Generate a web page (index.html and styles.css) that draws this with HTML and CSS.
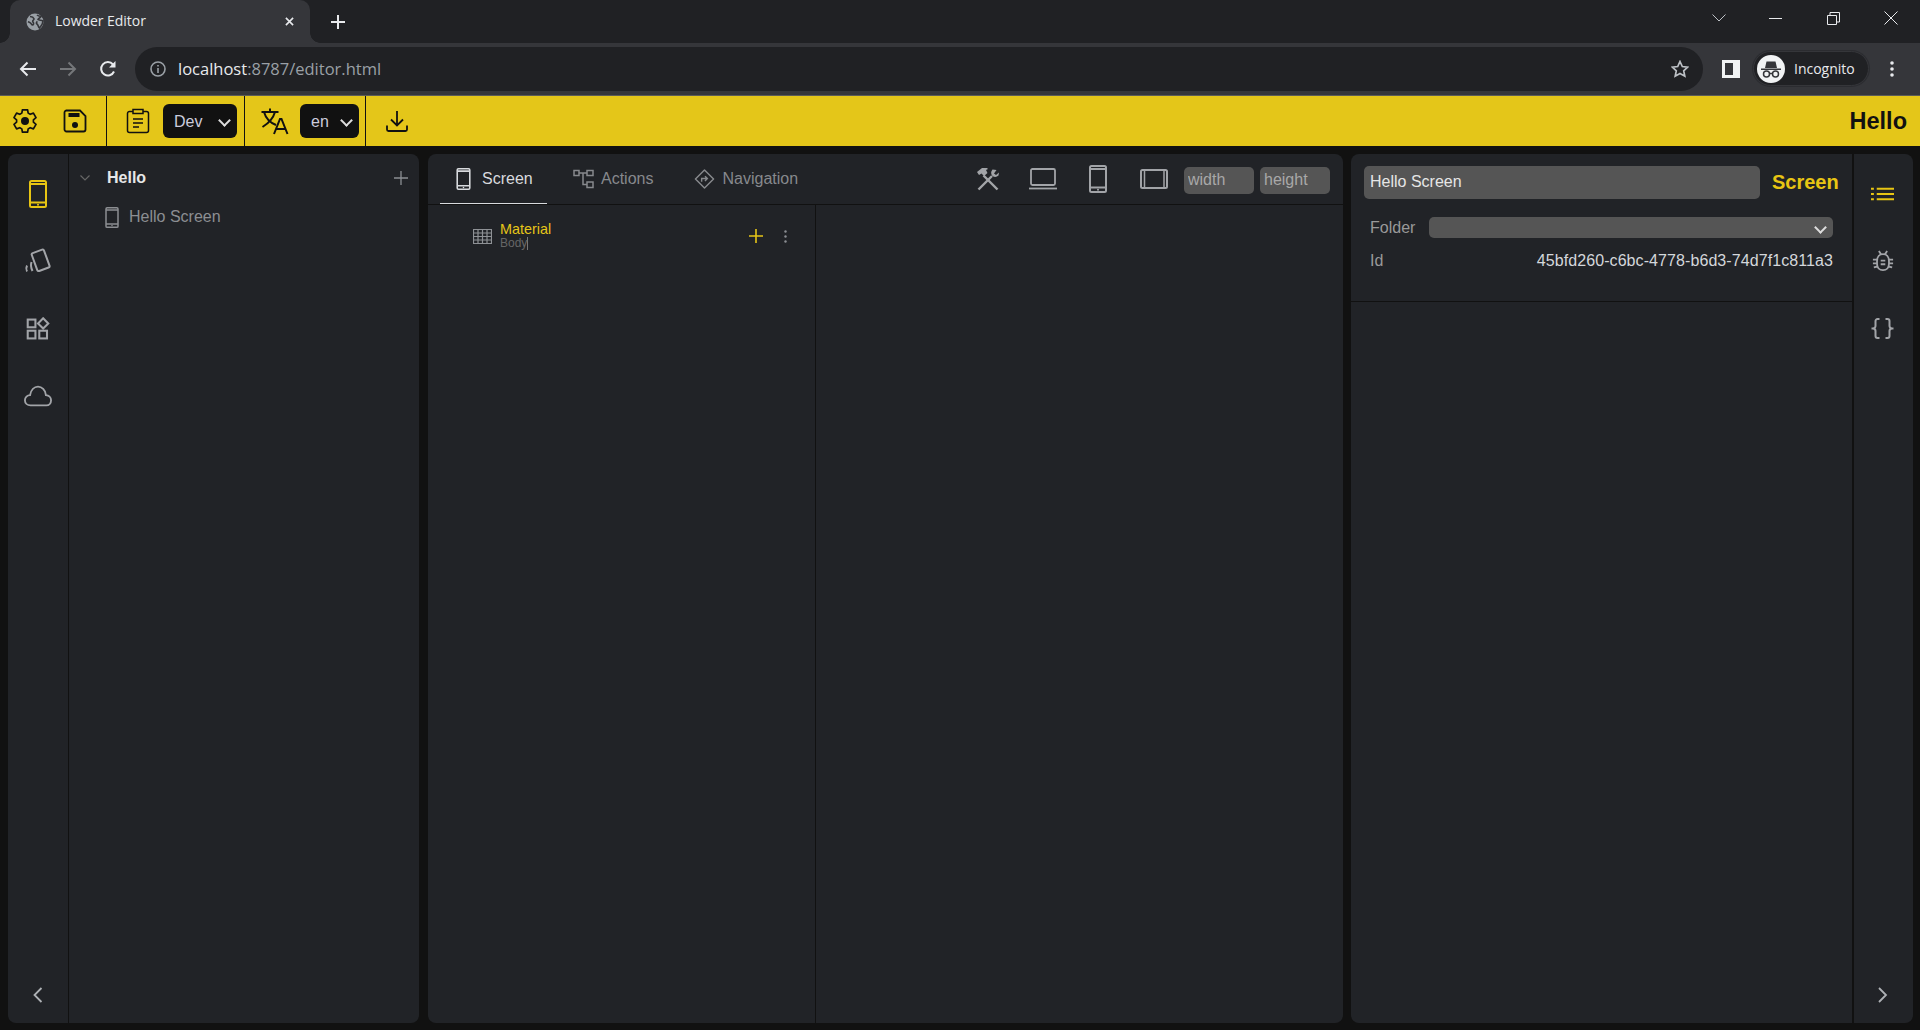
FILE: index.html
```html
<!DOCTYPE html>
<html lang="en">
<head>
<meta charset="utf-8">
<title>Lowder Editor</title>
<link rel="stylesheet" href="styles.css">
</head>
<body>
<svg class="defs" aria-hidden="true">
  <symbol id="i-phone" viewBox="0 0 18 28"><g fill="none" stroke="currentColor" stroke-width="2"><rect x="1" y="1" width="16" height="26" rx="1.5"/><path d="M1 4h16M1 22.5h16"/></g><circle cx="9" cy="24.8" r="1" fill="currentColor"/></symbol>
</svg>

<header class="tabstrip">
  <div class="tab">
    <svg class="tab-globe" viewBox="0 0 18 18"><circle cx="9" cy="9" r="8.5" fill="#9aa0a6"/><path d="M4 3.500c2 .2 3.500 1 4 2.200.3 1-1 1.400-1.300 2.400-.2 1 1.400 1.600.8 3-.4 1-1.500 1-2 0-.4-1-1.500-1.500-3.500-2.500M11 2c1 1 2.500 1.300 4 1.500-.5 1.500-2.500 1.500-3 3 1 1 3.500.5 5 1.500-.2 3-1.500 5-3.500 7-1.500-1-1-3-2.500-4-1.200-.8-.5-2 .5-2.500" fill="none" stroke="#35363a" stroke-width="1.600"/></svg>
    <span class="tab-title">Lowder Editor</span>
    <svg class="tab-close" viewBox="0 0 10 10"><path d="M1 1l8 8M9 1l-8 8" stroke="#e8eaed" stroke-width="1.800" fill="none"/></svg>
  </div>
  <svg class="new-tab" viewBox="0 0 14 14"><path d="M7 0v14M0 7h14" stroke="#e8eaed" stroke-width="2" fill="none"/></svg>
  <div class="window-controls">
    <svg class="win-chevron" viewBox="0 0 14 8"><path d="M.5.5L7 7 13.500.5" stroke="#bdc1c6" fill="none"/></svg>
    <svg class="win-min" viewBox="0 0 13 1"><path d="M0 .5h13" stroke="#e8eaed" fill="none"/></svg>
    <svg class="win-restore" viewBox="0 0 13 13"><path d="M.5 3.500h9v9h-9zM3 3.500V.5h9.500V10H9.500" stroke="#e8eaed" fill="none"/></svg>
    <svg class="win-close" viewBox="0 0 14 14"><path d="M.5.5l13 13M13.500.5l-13 13" stroke="#e8eaed" fill="none"/></svg>
  </div>
</header>

<nav class="browserbar">
  <svg class="nav-icon" viewBox="0 0 18 16"><path d="M17 8H2M8.500 1.500L2 8l6.500 6.500" stroke="#e8eaed" stroke-width="2" fill="none"/></svg>
  <svg class="nav-icon" viewBox="0 0 18 16"><path d="M1 8h15M9.500 1.500L16 8l-6.500 6.500" stroke="#75777a" stroke-width="2" fill="none"/></svg>
  <svg class="nav-icon nav-reload" viewBox="0 0 18 18"><path d="M15 11.500A6.700 6.700 0 1 1 14 4.500" stroke="#e8eaed" stroke-width="2" fill="none"/><path d="M16.500 1v6.500H10z" fill="#e8eaed"/></svg>
  <div class="omnibox">
    <svg class="omni-info" viewBox="0 0 16 16"><circle cx="8" cy="8" r="7" stroke="#9aa0a6" stroke-width="1.600" fill="none"/><path d="M8 7v5M8 4v1.600" stroke="#9aa0a6" stroke-width="1.600" fill="none"/></svg>
    <span class="url"><span class="url-host">localhost</span>:8787/editor.html</span>
    <svg class="omni-star" viewBox="0 0 18 18"><path d="M9 1.500l2.300 5 5.400.6-4 3.700 1.100 5.400L9 13.500l-4.800 2.700 1.100-5.400-4-3.700 5.400-.6z" stroke="#bdc1c6" stroke-width="1.700" fill="none"/></svg>
  </div>
  <svg class="side-panel" viewBox="0 0 18 18"><rect width="18" height="18" fill="#f1f3f4"/><rect x="3" y="3" width="8" height="12" fill="#35363a"/></svg>
  <div class="profile">
    <svg class="profile-avatar" viewBox="0 0 28 28"><circle cx="14" cy="14" r="14" fill="#f1f3f4"/><path d="M4 13.500h20v1.500H4zM8 13l1.500-6.500h9L20 13z" fill="#35363a"/><g fill="none" stroke="#35363a" stroke-width="1.500"><circle cx="9.500" cy="19" r="3"/><circle cx="18.500" cy="19" r="3"/><path d="M12.500 18.500h3"/></g></svg>
    <span class="profile-name">Incognito</span>
  </div>
  <svg class="browser-menu" viewBox="0 0 4 16"><circle cx="2" cy="2" r="1.800" fill="#e8eaed"/><circle cx="2" cy="8" r="1.800" fill="#e8eaed"/><circle cx="2" cy="14" r="1.800" fill="#e8eaed"/></svg>
</nav>

<div class="topbar">
  <div class="bar-group group-file">
    <span class="bar-icon"><svg class="ic-24" viewBox="0 0 24 24"><path d="M9.410.8H14.590L15.180 4.120 17.230 5.300 20.410 4.160 23 8.640 20.420 10.820V13.180L23 15.360 20.410 19.840 17.230 18.700 15.180 19.880 14.590 23.200H9.410L8.820 19.880 6.770 18.700 3.590 19.840 1 15.360 3.580 13.180V10.820L1 8.640 3.590 4.160 6.770 5.300 8.820 4.120z" fill="none" stroke="#111" stroke-width="1.700" stroke-linejoin="round"/><circle cx="12" cy="12" r="4" fill="#111"/></svg></span>
    <span class="bar-icon"><svg class="ic-24" viewBox="0 0 24 24"><path d="M3 1.500h14l5.500 5.500v13.500a2 2 0 0 1-2 2h-17a2 2 0 0 1-2-2v-17a2 2 0 0 1 2-2z" fill="none" stroke="#111" stroke-width="1.800"/><rect x="5.500" y="4" width="11" height="4" fill="#111"/><circle cx="12" cy="16" r="3" fill="#111"/></svg></span>
  </div>
  <div class="bar-group group-env">
    <span class="bar-icon icon-slim"><svg class="ic-24 ic-clip" viewBox="0 0 24 26"><path d="M7 3.500H3.500a2 2 0 0 0-2 2v17a2 2 0 0 0 2 2h17a2 2 0 0 0 2-2v-17a2 2 0 0 0-2-2H17M7 1.500h10v4H7zM7 11h10M7 15h10M7 19h6" fill="none" stroke="#111" stroke-width="1.500"/></svg></span>
    <span class="select-wrap"><select class="bar-select select-env"><option>Dev</option></select></span>
  </div>
  <div class="bar-group group-lang">
    <span class="bar-icon icon-slim"><svg class="ic-27" viewBox="0 0 28 27"><path d="M.5 4h17M9 .5V4M3 4c2 7 7 11 12 13M14 4c-2 7-6 11-12.500 15M13 26l6-15h1.500l6 15M15.500 21h9" fill="none" stroke="#111" stroke-width="2"/></svg></span>
    <span class="select-wrap"><select class="bar-select select-lang"><option>en</option></select></span>
  </div>
  <span class="bar-icon icon-slim icon-download"><svg class="ic-22" viewBox="0 0 22 22"><path d="M11 1v14M5 9.500l6 6 6-6M1 15.500v4a1.500 1.500 0 0 0 1.500 1.500h17a1.500 1.500 0 0 0 1.500-1.500v-4" fill="none" stroke="#111" stroke-width="1.800"/></svg></span>
  <strong class="app-name">Hello</strong>
</div>

<main class="workspace">
  <section class="panel panel-left">
    <aside class="rail rail-left">
      <div class="rail-icons">
        <svg class="rail-icon active"><use href="#i-phone"/></svg>
        <svg class="rail-icon" viewBox="0 0 28 28"><g fill="none" stroke="currentColor" stroke-width="2"><rect x="10" y="3" width="13" height="19" rx="1.500" transform="rotate(-20 16 12)"/><path d="M7.500 14c-1 3-.5 6 1 9M3 17.500c-1 2-1 4 0 6"/></g></svg>
        <svg class="rail-icon icon-grid" viewBox="0 0 28 28"><g fill="none" stroke="currentColor" stroke-width="2.400"><rect x="2" y="3" width="9" height="9"/><rect x="2" y="16" width="9" height="9"/><rect x="15.500" y="16" width="9" height="9"/><path d="M20 1.500l6 6-6 6-6-6z"/></g></svg>
        <svg class="rail-icon icon-cloud" viewBox="0 0 30 22"><path d="M7 21C3.500 21 1 18.500 1 15.500S3.500 10 6.500 10C7.500 4.500 11 1 15 1s8 3.500 8.500 9c3 .3 5.500 2.500 5.500 5.500S27 21 24 21z" fill="none" stroke="currentColor" stroke-width="2"/></svg>
      </div>
      <svg class="collapse" viewBox="0 0 10 16"><path d="M8.500 1l-7 7 7 7" fill="none" stroke="#aeb1b5" stroke-width="1.800"/></svg>
    </aside>
    <div class="tree">
      <div class="tree-head">
        <svg class="tree-chevron" viewBox="0 0 10 6"><path d="M.5.5L5 5 9.500.5" fill="none" stroke="#666" stroke-width="1.200"/></svg>
        <strong class="tree-title">Hello</strong>
        <svg class="tree-add" viewBox="0 0 14 14"><path d="M7 0v14M0 7h14" stroke="#8b8e93" stroke-width="1.300" fill="none"/></svg>
      </div>
      <div class="tree-item">
        <svg class="tree-phone"><use href="#i-phone"/></svg>
        <span>Hello Screen</span>
      </div>
    </div>
  </section>

  <section class="panel panel-mid">
    <div class="mid-head">
      <div class="tabs">
        <div class="edit-tab active">
          <svg class="tab-phone"><use href="#i-phone"/></svg>
          <span>Screen</span>
        </div>
        <div class="edit-tab">
          <svg class="tab-glyph" viewBox="0 0 21 19"><g fill="none" stroke="currentColor" stroke-width="1.500"><rect x="1" y="1" width="5" height="5"/><rect x="14" y="1" width="6" height="5"/><rect x="14" y="12.500" width="6" height="5.500"/><path d="M6 3.500h8M10 3.500V15h4"/></g></svg>
          <span>Actions</span>
        </div>
        <div class="edit-tab tab-nav">
          <svg class="tab-glyph" viewBox="0 0 21 21"><g fill="none" stroke="currentColor" stroke-width="1.500"><path d="M10.500 1L20 10.500 10.500 20 1 10.500z" stroke-linejoin="round"/><path d="M7.500 13.500V10h5.500M11 7.500l2.500 2.500-2.500 2.500"/></g></svg>
          <span>Navigation</span>
        </div>
      </div>
      <div class="viewport-tools">
        <svg class="tool tool-hammer" viewBox="0 0 24 24"><g fill="none" stroke="currentColor"><path d="M21.500 22.500L7.500 8.500" stroke-width="2.400"/><path d="M2.500 22.500L16 9" stroke-width="2.400"/></g><path d="M1 5l5-4h5l1 1-2 1 1.500 3L8 9 5.500 6.500 3 8z" fill="currentColor"/><path d="M16.500 2.500a5 5 0 0 0 0 6.500 4.800 4.800 0 0 0 6-.5l.5-3-3 2.500-2-1.500 2.500-3.500z" fill="currentColor"/></svg>
        <svg class="tool tool-laptop" viewBox="0 0 28 22"><g fill="none" stroke="currentColor" stroke-width="1.800"><rect x="2" y="1" width="24" height="16" rx="1.500"/><path d="M0 20.500h28"/></g></svg>
        <svg class="tool tool-phone"><use href="#i-phone"/></svg>
        <svg class="tool tool-tablet" viewBox="0 0 28 20"><g fill="none" stroke="currentColor" stroke-width="2"><rect x="1" y="1" width="26" height="18" rx="1.500"/><path d="M4.500 1v18M24 1v18" stroke-width="1.500"/></g></svg>
        <input class="size-input" type="text" placeholder="width">
        <input class="size-input" type="text" placeholder="height">
      </div>
    </div>
    <div class="mid-body">
      <div class="outline">
        <div class="outline-row">
          <svg class="outline-grid" viewBox="0 0 19 15"><path d="M.5.5h18v14H.5zM.5 4h18M.5 7.500h18M.5 11h18M5 .5v14M9.500.5v14M14 .5v14" fill="none" stroke="#8e9195" stroke-width="1.200"/></svg>
          <div class="outline-label">
            <span class="outline-name">Material</span>
            <span class="outline-type">Body</span>
          </div>
          <svg class="outline-add" viewBox="0 0 14 14"><path d="M7 0v14M0 7h14" stroke="#e5c518" stroke-width="1.600" fill="none"/></svg>
          <svg class="outline-more" viewBox="0 0 3 13"><circle cx="1.500" cy="1.500" r="1.200" fill="#8b8e93"/><circle cx="1.500" cy="6.500" r="1.200" fill="#8b8e93"/><circle cx="1.500" cy="11.500" r="1.200" fill="#8b8e93"/></svg>
        </div>
      </div>
      <div class="canvas"></div>
    </div>
  </section>

  <section class="panel panel-right">
    <div class="props">
      <div class="props-head">
        <div class="props-title">
          <input class="name-input" type="text" value="Hello Screen">
          <strong class="props-kind">Screen</strong>
        </div>
        <div class="prop-row prop-folder">
          <span class="prop-label">Folder</span>
          <span class="select-wrap"><select class="folder-select"><option></option></select></span>
        </div>
        <div class="prop-row prop-id">
          <span class="prop-label">Id</span>
          <span class="prop-value">45bfd260-c6bc-4778-b6d3-74d7f1c811a3</span>
        </div>
      </div>
    </div>
    <aside class="rail rail-right">
      <div class="rail-icons">
        <svg class="rail-icon active icon-list" viewBox="0 0 24 14"><path d="M6 1.500h18M6 7h18M6 12.500h18" stroke="currentColor" stroke-width="2" fill="none"/><path d="M0 1.500h3M0 7h3M0 12.500h3" stroke="currentColor" stroke-width="2" fill="none"/></svg>
        <svg class="rail-icon icon-bug" viewBox="0 0 24 24"><g fill="none" stroke="currentColor" stroke-width="2"><path d="M12 4.500c4 0 6.500 3 6.500 7.500v3c0 4-2.500 7-6.500 7s-6.500-3-6.500-7v-3c0-4.500 2.500-7.500 6.500-7.500z"/><path d="M7.500 1l2.500 4M16.500 1L14 5M1 10.500h4.500M18.500 10.500H23M1 14.500h4.500M18.500 14.500H23M2 19l4-1M22 19l-4-1M9.500 11.500h5M9.500 15.500h5"/></g></svg>
        <svg class="rail-icon icon-braces" viewBox="0 0 25 21"><path d="M9.500 1H7.500a2 2 0 0 0-2 2v5a2.500 2.500 0 0 1-2.500 2.500H1.500H3a2.500 2.500 0 0 1 2.500 2.500v5a2 2 0 0 0 2 2h2M15.500 1h2a2 2 0 0 1 2 2v5a2.500 2.500 0 0 0 2.500 2.500h1.500H22a2.500 2.500 0 0 0-2.500 2.500v5a2 2 0 0 1-2 2h-2" fill="none" stroke="currentColor" stroke-width="2"/></svg>
      </div>
      <svg class="collapse" viewBox="0 0 10 16"><path d="M1 1l7 7-7 7" fill="none" stroke="#aeb1b5" stroke-width="1.800"/></svg>
    </aside>
  </section>
</main>
</body>
</html>
```

FILE: styles.css
```css
* { box-sizing: border-box; }
html, body { height: 100%; }
body {
  margin: 0;
  height: 1030px;
  overflow: hidden;
  display: flex;
  flex-direction: column;
  background: #111;
  font-family: "Liberation Sans", Arial, sans-serif;
  font-size: 16px;
  color: #999;
}
svg { display: block; flex: none; }
.defs { position: absolute; width: 0; height: 0; }

/* Browser chrome */
.tabstrip {
  height: 43px;
  flex: none;
  background: #202124;
  display: flex;
  align-items: center;
  padding-left: 10px;
}
.tab {
  position: relative;
  width: 300px;
  height: 43px;
  background: #35363a;
  border-radius: 10px 10px 0 0;
  display: flex;
  align-items: center;
  padding: 0 10px 0 16px;
  color: #e8eaed;
}
.tab::before, .tab::after {
  content: "";
  position: absolute;
  bottom: 0;
  width: 10px;
  height: 10px;
}
.tab::before { left: -10px; background: radial-gradient(circle at 0 0, transparent 9.5px, #35363a 10px); }
.tab::after { right: -10px; background: radial-gradient(circle at 100% 0, transparent 9.5px, #35363a 10px); }
.tab-globe { width: 18px; height: 18px; margin-right: 11px; }
.tab-title { flex: 1; font: 14px/1 "Open Sans", sans-serif; letter-spacing: -.04px; padding-bottom: 1px; }
.tab-close { width: 9px; height: 9px; margin-right: 6px; }
.new-tab { width: 14px; height: 14px; margin-left: 21px; }
.window-controls {
  margin-left: auto;
  display: flex;
  align-items: center;
  height: 36px;
  align-self: flex-start;
}
.win-chevron { width: 14px; height: 8px; margin-right: 43px; }
.win-min { width: 13px; height: 1px; margin-right: 45px; }
.win-restore { width: 13px; height: 13px; margin-right: 44px; }
.win-close { width: 14px; height: 14px; margin-right: 22px; }

.browserbar {
  height: 53px;
  flex: none;
  background: #35363a;
  border-bottom: 1px solid #5c5c58;
  display: flex;
  align-items: center;
  padding: 0 0 1px 19px;
}
.nav-icon { width: 18px; height: 16px; margin-right: 22px; }
.nav-reload { height: 18px; margin-right: 18px; }
.omnibox {
  width: 1568px;
  height: 44px;
  border-radius: 22px;
  background: #202124;
  display: flex;
  align-items: center;
  padding: 0 14px 0 15px;
}
.omni-info { width: 16px; height: 16px; margin-right: 12px; }
.url { flex: 1; padding-top: 2px; font: 16.500px/1 "Open Sans", sans-serif; color: #9aa0a6; }
.url-host { color: #e8eaed; }
.omni-star { width: 18px; height: 18px; }
.side-panel { width: 18px; height: 18px; margin-left: 19px; }
.profile {
  width: 116px;
  height: 35px;
  margin-left: 13px;
  border-radius: 18px;
  background: #202124;
  border: 1px solid #35363a;
  box-shadow: 0 0 0 1px #2b2c30;
  display: flex;
  align-items: center;
  padding-left: 3px;
}
.profile-avatar { width: 28px; height: 28px; }
.profile-name { margin-left: 9px; font: 14px/1 "Open Sans", sans-serif; color: #e8eaed; }
.browser-menu { width: 4px; height: 16px; margin-left: 21px; }

/* Yellow toolbar */
.topbar {
  height: 50px;
  flex: none;
  background: #e4c619;
  display: flex;
  align-items: stretch;
}
.bar-group {
  display: flex;
  align-items: center;
  border-right: 1.500px solid #111;
}
.group-file { width: 107px; }
.group-env { width: 138px; padding-left: 13px; gap: 7px; }
.group-lang { width: 121px; padding-left: 12px; gap: 7px; }
.bar-icon {
  width: 50px;
  display: flex;
  justify-content: center;
  align-items: center;
}
.icon-slim { width: 36px; }
.icon-download { margin-left: 13px; }
.ic-24 { width: 24px; height: 24px; }
.ic-clip { height: 26px; }
.ic-27 { width: 28px; height: 27px; }
.ic-22 { width: 22px; height: 22px; }
.select-wrap { position: relative; display: block; flex: none; }
.select-wrap::after {
  content: "";
  position: absolute;
  top: 50%;
  right: 8px;
  width: 7px;
  height: 7px;
  margin-top: -5px;
  border-right: 2px solid #ddd;
  border-bottom: 2px solid #ddd;
  transform: rotate(45deg);
  pointer-events: none;
}
.bar-select {
  display: block;
  appearance: none;
  height: 34px;
  border: 0;
  border-radius: 6px;
  background: #111;
  color: #ccd;
  font: 16px "Liberation Sans", Arial, sans-serif;
  padding: 0 0 0 11px;
  outline: 0;
}
.select-env { width: 74px; }
.select-lang { width: 59px; }
.app-name {
  margin-left: auto;
  padding-right: 13px;
  align-self: center;
  font-size: 23.500px;
  color: #111;
}

/* Workspace */
.workspace {
  flex: 1;
  min-height: 0;
  display: flex;
  padding: 8px 7px 7px 8px;
  background: #111;
}
.panel {
  background: #212327;
  border-radius: 8px;
  display: flex;
  min-width: 0;
}
.panel-left { width: 411px; margin-right: 9px; }
.panel-mid { width: 915px; margin-right: 8px; flex-direction: column; }
.panel-right { width: 562px; }

.rail {
  flex: none;
  display: flex;
  flex-direction: column;
  align-items: center;
  justify-content: space-between;
  padding: 0 0 20px;
}
.rail-left { width: 61px; border-right: 1px solid #111; padding-right: 1px; }
.rail-right { width: 61px; border-left: 2px solid #111; padding-right: 2px; }
.rail-icons {
  display: flex;
  flex-direction: column;
  align-items: center;
}
.rail-icon {
  width: 28px;
  height: 28px;
  color: #a2a4a8;
  margin-top: 26px;
  margin-bottom: 13px;
}
.rail-left .rail-icon:first-child { width: 18px; margin-bottom: 14px; }
.rail-icon.active { color: #e8c513; }
.rail-icon.icon-grid { width: 24px; height: 24px; margin-top: 28px; margin-bottom: 15px; }
.rail-icon.icon-list { width: 23px; height: 14px; margin-top: 33px; margin-bottom: 20px; }
.rail-icon.icon-bug { width: 22px; height: 22px; margin-top: 29px; margin-bottom: 17px; }
.rail-icon.icon-braces { width: 25px; height: 21px; margin-top: 29px; margin-bottom: 17px; }
.collapse { width: 10px; height: 16px; }

.tree { flex: 1; padding: 0 9px 0 11px; }
.tree-head {
  height: 47px;
  display: flex;
  align-items: center;
}
.tree-chevron { width: 10px; height: 6px; margin-right: 16px; }
.tree-title { color: #e6e7e8; flex: 1; margin-left: 1px; }
.tree-add { width: 14px; height: 14px; margin-right: 2px; }
.tree-item {
  height: 30px;
  margin-top: 1px;
  display: flex;
  align-items: center;
  padding-left: 25px;
  color: #8c8e92;
}
.tree-phone { width: 14px; height: 21px; margin-right: 10px; color: #8c8e92; }

.mid-head {
  height: 51px;
  flex: none;
  display: flex;
  justify-content: space-between;
  align-items: stretch;
  border-bottom: 1px solid #111;
  padding: 0 13px 0 12px;
}
.tabs { display: flex; }
.edit-tab {
  display: flex;
  align-items: center;
  gap: 7px;
  padding: 0 13px 0 14px;
  color: #87898d;
  margin-right: 12px;
  border-bottom: 1px solid transparent;
}
.edit-tab.active {
  width: 107px;
  padding: 0 0 0 16px;
  gap: 11px;
  color: #d8dade;
  border-bottom-color: #d8dade;
}
.edit-tab.tab-nav { margin-left: 2px; }
.tab-phone { width: 15px; height: 22px; }
.tab-glyph { width: 21px; height: 20px; }
.viewport-tools {
  display: flex;
  align-items: center;
}
.tool { color: #a2a4a8; flex: none; }
.tool-hammer { width: 24px; height: 24px; margin-right: 29px; }
.tool-laptop { width: 28px; height: 22px; margin-right: 32px; }
.tool-phone { width: 18px; height: 28px; margin-right: 33px; }
.tool-tablet { width: 28px; height: 20px; margin-right: 16px; }
.size-input {
  width: 70px;
  height: 27px;
  border: 0;
  border-radius: 5px;
  background: #555;
  color: #ccc;
  font: 16px "Liberation Sans", Arial, sans-serif;
  padding: 0 4px;
  margin: 2px 0 0 6px;
  outline: 0;
}
.size-input:first-of-type { margin-left: 0; }
.size-input::placeholder { color: #a8a8a8; opacity: 1; }

.mid-body { flex: 1; display: flex; min-height: 0; }
.outline { width: 388px; border-right: 1px solid #111; flex: none; padding: 16px 28px 0 45px; }
.outline-row { display: flex; align-items: center; height: 30px; }
.outline-grid { width: 19px; height: 15px; margin-right: 8px; }
.outline-label { flex: 1; display: flex; flex-direction: column; }
.outline-name { font-size: 14.400px; line-height: 15px; color: #e5c518; }
.outline-type {
  font-size: 12px;
  line-height: 13px;
  color: #666;
  align-self: flex-start;
  border-right: 1px solid #777;
}
.outline-add { width: 14px; height: 14px; margin-right: 21px; }
.outline-more { width: 3px; height: 13px; }
.canvas { flex: 1; }

.props { flex: 1; min-width: 0; }
.props-head { height: 148px; border-bottom: 1px solid #111; padding: 12px 19px 0 13px; }
.props-title { display: flex; align-items: center; height: 33px; }
.name-input {
  flex: none;
  width: 396px;
  height: 33px;
  border: 0;
  border-radius: 5px;
  background: #555;
  color: #e6e6e6;
  font: 16px "Liberation Sans", Arial, sans-serif;
  padding: 0 6px 2px;
  outline: 0;
}
.props-kind { flex: none; margin-left: 12px; font-size: 20px; color: #e8c513; }
.prop-row { display: flex; align-items: center; padding-left: 6px; }
.prop-folder { margin-top: 18px; height: 21px; }
.prop-id { margin-top: 12px; height: 21px; }
.prop-label { color: #999; width: 59px; flex: none; }
.folder-select {
  display: block;
  appearance: none;
  width: 404px;
  height: 21px;
  border: 0;
  border-radius: 5px;
  background: #555;
  color: #ddd;
  outline: 0;
}
.prop-value { margin-left: auto; width: 404px; text-align: right; color: #d4d7db; letter-spacing: .083px; }
```
